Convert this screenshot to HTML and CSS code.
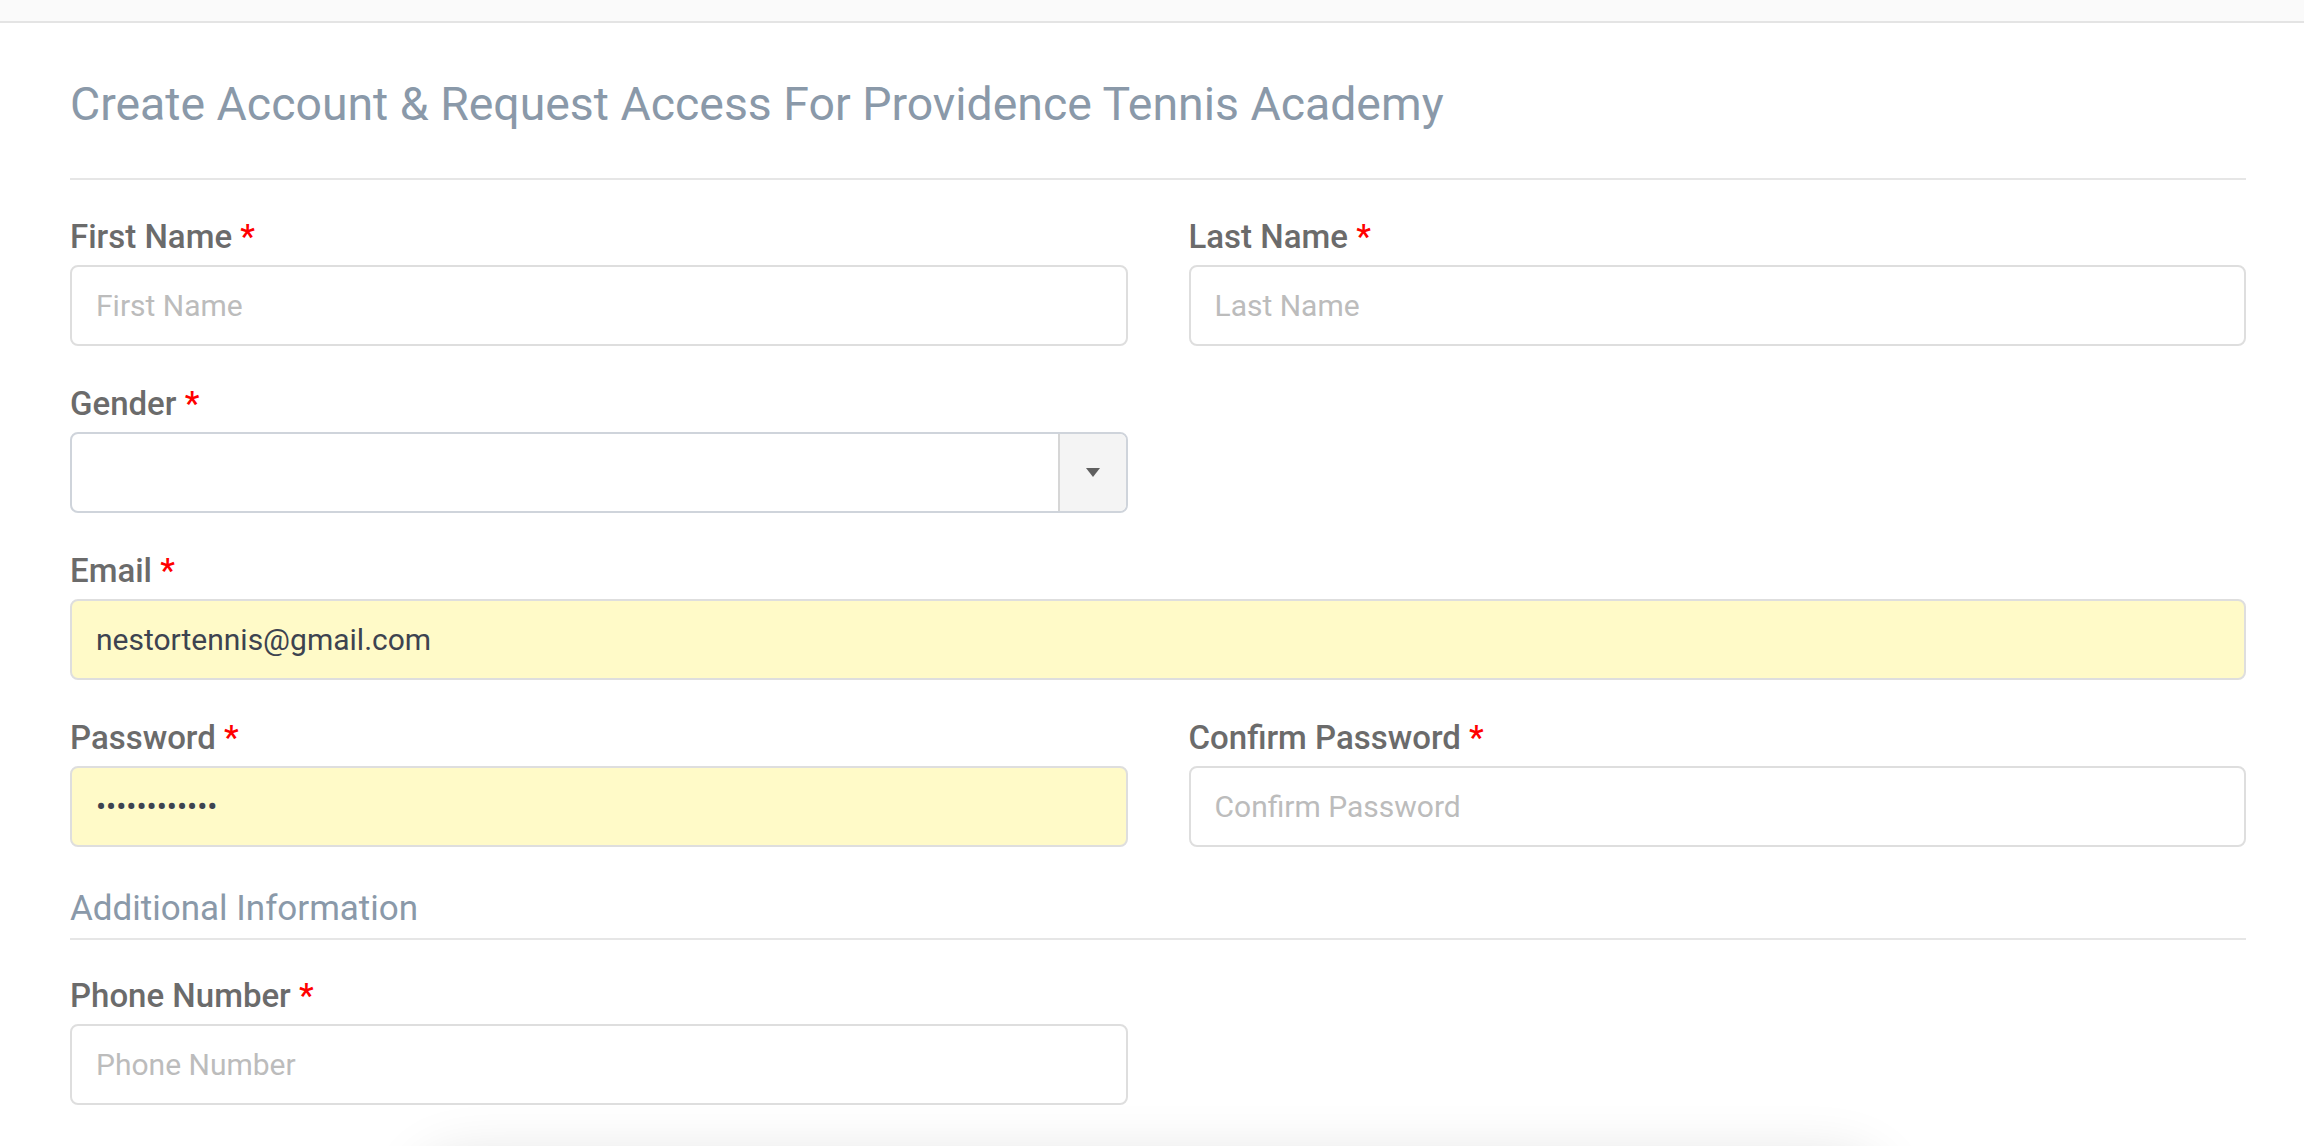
FILE: index.html
```html
<!DOCTYPE html>
<html lang="en">
<head>
    <meta charset="UTF-8">
    <meta name="viewport" content="width=device-width, initial-scale=1.0">
    <title>Create Account</title>
    <link rel="stylesheet" href="styles.css">
</head>
<body>

    <div class="topbar"></div>

    <main class="page">
        <h1 class="title">Create Account &amp; Request Access For Providence Tennis Academy</h1>

        <form class="signup">
            <div class="row">
                <div class="field">
                    <label for="first-name">First Name <span class="req">*</span></label>
                    <input id="first-name" type="text" placeholder="First Name">
                </div>
                <div class="field">
                    <label for="last-name">Last Name <span class="req">*</span></label>
                    <input id="last-name" type="text" placeholder="Last Name">
                </div>
            </div>

            <div class="row">
                <div class="field">
                    <label for="gender">Gender <span class="req">*</span></label>
                    <div class="select" id="gender">
                        <span class="select-value"></span>
                        <span class="select-arrow">
                            <svg width="16" height="11" viewBox="0 0 16 11"><path d="M1 1h14L8 10z" fill="#5f5f5f"/></svg>
                        </span>
                    </div>
                </div>
            </div>

            <div class="row single">
                <div class="field">
                    <label for="email">Email <span class="req">*</span></label>
                    <input id="email" class="filled" type="text" value="nestortennis@gmail.com">
                </div>
            </div>

            <div class="row">
                <div class="field">
                    <label for="password">Password <span class="req">*</span></label>
                    <input id="password" class="filled" type="password" value="abcdefghijkl">
                </div>
                <div class="field">
                    <label for="confirm">Confirm Password <span class="req">*</span></label>
                    <input id="confirm" type="password" placeholder="Confirm Password">
                </div>
            </div>

            <h2 class="section">Additional Information</h2>

            <div class="row">
                <div class="field">
                    <label for="phone">Phone Number <span class="req">*</span></label>
                    <input id="phone" type="text" placeholder="Phone Number">
                </div>
            </div>
        </form>
    </main>

    <!-- floating bar sitting just below the fold -->
    <div class="float-bar"></div>

</body>
</html>
```

FILE: styles.css
```css
body {
    margin: 0;
    padding: 0;
    background-color: #fff;
    font-family: Roboto, "Liberation Sans", sans-serif;
    overflow: hidden;
}
.topbar {
    height: 21px;
    background-color: #fafafa;
    border-bottom: 2px solid #e4e4e4;
}
.page {
    padding: 0 58px 0 70px;
}
.title {
    margin: 55px 0 0;
    padding-bottom: 47px;
    border-bottom: 2px solid #e6e6e6;
    font-size: 46.4px;
    line-height: 53px;
    font-weight: 400;
    color: #8a99a9;
}
.signup {
    padding-top: 39px;
}
.row {
    display: grid;
    grid-template-columns: 1fr 1fr;
    column-gap: 61px;
    margin-bottom: 40px;
}
.row.single {
    grid-template-columns: 1fr;
}
.field label {
    display: block;
    margin-bottom: 10px;
    font-size: 33px;
    line-height: 36px;
    font-weight: 500;
    color: #6b6b6b;
}
.req {
    color: #f00;
}
.field input,
.select {
    box-sizing: border-box;
    width: 100%;
    height: 81px;
    padding: 0 24px;
    border: 2px solid #dedede;
    border-radius: 8px;
    background-color: #fff;
    font-family: Roboto, "Liberation Sans", sans-serif;
    font-size: 30px;
    color: #3d4350;
    outline: none;
}
.field input::placeholder {
    color: #bcbcbc;
}
.field input.filled {
    background-color: #fffac8;
}
.select {
    display: flex;
    padding: 0;
    border-color: #cfd4db;
    overflow: hidden;
}
.select-value {
    flex: 1;
}
.select-arrow {
    display: flex;
    align-items: center;
    justify-content: center;
    width: 66px;
    background-color: #f4f4f4;
    border-left: 2px solid #d6d6d6;
}
.section {
    margin: 44px 0 38px;
    padding-bottom: 11px;
    border-bottom: 2px solid #e6e6e6;
    font-size: 35px;
    line-height: 36px;
    font-weight: 400;
    color: #8a99a9;
}
.float-bar {
    position: absolute;
    left: 420px;
    top: 1160px;
    width: 1460px;
    height: 200px;
    border-radius: 40px;
    background-color: #fff;
    box-shadow: 0 0 60px rgba(0, 0, 0, 0.14);
}
```
